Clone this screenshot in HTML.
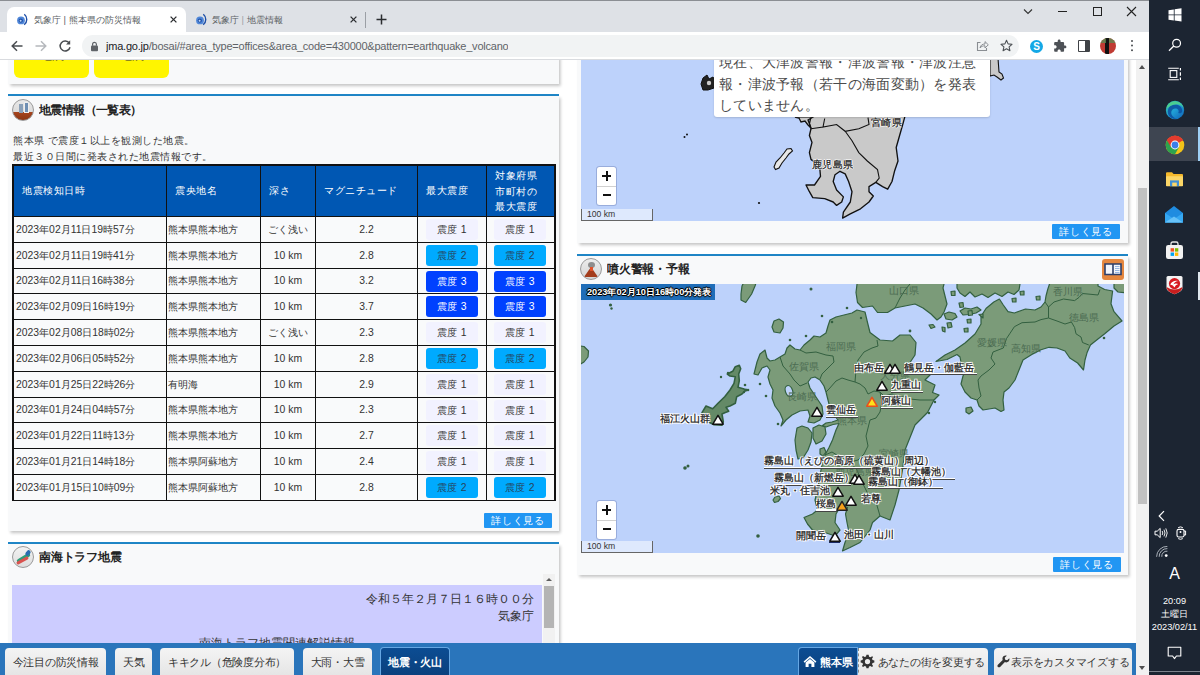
<!DOCTYPE html>
<html lang="ja">
<head>
<meta charset="utf-8">
<title>気象庁 | 熊本県の防災情報</title>
<style>
*{box-sizing:border-box;margin:0;padding:0}
html,body{width:1200px;height:675px;overflow:hidden;background:#fff}
body{position:relative;font-family:"Liberation Sans",sans-serif;color:#222;font-size:10.5px;line-height:1.2}
.abs{position:absolute}
.nw{white-space:nowrap;overflow:hidden}
/* ---------- browser chrome ---------- */
#tabstrip{left:0;top:0;width:1149px;height:32px;background:#dee1e6;border-top:1px solid #8b8e93}
#tab1{left:7px;top:7px;width:179px;height:26px;background:#fff;border-radius:7px 7px 0 0}
.tabtxt{top:12.8px;height:14px;font-size:9.4px;line-height:14px;color:#5a5e63;letter-spacing:0}
#toolbar{left:0;top:32px;width:1149px;height:28px;background:#fff;border-bottom:1px solid #d9dbdf}
#omni{left:82px;top:35px;width:937px;height:22px;border-radius:11px;background:#f1f3f4}
#url{left:106px;top:38px;height:16px;font-size:11px;line-height:16px;color:#5f6368;letter-spacing:-.22px}
#url b{font-weight:normal;color:#202124}
/* ---------- windows taskbar ---------- */
#taskbar{left:1149px;top:0;width:51px;height:675px;background:#1c2532}
#taskbar .t{position:absolute;left:0;width:51px;text-align:center;color:#fff;font-size:9.2px;line-height:12px;white-space:nowrap}
/* ---------- page ---------- */
#page{left:0;top:60px;width:1136px;height:615px;background:#fff;overflow:hidden}
#vscroll{left:1136px;top:60px;width:13px;height:615px;background:#f1f1f1}
.card{position:absolute;background:#f8f9fa;box-shadow:1.5px 2px 3px rgba(0,0,0,.24)}
.bline{position:absolute;height:2px;background:#1f86c7}
.sect{position:absolute;font-size:12px;font-weight:bold;color:#222;line-height:16px;white-space:nowrap;overflow:hidden;letter-spacing:-.2px}
.icon{position:absolute;width:22px;height:22px;border-radius:50%;border:1px solid #9a9a9a;background:#eee;overflow:hidden}
.more{position:absolute;width:68px;height:15px;background:#2196f3;color:#fff;font-size:10.4px;line-height:15px;text-align:center;border-radius:1px;white-space:nowrap;overflow:hidden;letter-spacing:.7px}
/* table */
#tbl{left:12px;top:164px;width:544px;height:337px;background:#111}
#tbl div{position:absolute;overflow:hidden;white-space:nowrap}
.th{background:#0057b3;color:#fff;font-size:10.4px;line-height:14px;padding-left:8px;letter-spacing:.5px}
.td{background:#f9fafb;color:#333;font-size:10.4px;line-height:24px;height:24px}
.c{text-align:center}
.bd{position:absolute;left:8px;top:2px;width:52px;height:21px;border-radius:3px;line-height:21px;text-align:center;font-size:10.4px;letter-spacing:.2px}
.s1{background:#f2f2ff;color:#333}
.s2{background:#00aaff;color:#26445a}
.s3{background:#0041ff;color:#fff}
/* bottom bar */
#bbar{left:0;top:643px;width:1136px;height:32px;background:#2a75bb}
.bb{position:absolute;top:5px;height:30px;border-radius:4px 4px 0 0;background:linear-gradient(#f4f4f4,#e4e4e4);color:#333;font-size:11px;line-height:28px;text-align:center;white-space:nowrap;overflow:hidden;letter-spacing:-.25px}
.bbon{background:linear-gradient(#0c4d93,#0a3f7c);color:#fff;font-weight:bold;border:1px solid #66a7e4;border-bottom:none;top:4px}
</style>
</head>
<body>
<!-- ================= BROWSER CHROME ================= -->
<div id="tabstrip" class="abs"></div>
<div id="tab1" class="abs"></div>
<svg class="abs" style="left:15px;top:12px" width="14" height="14" viewBox="0 0 14 14"><circle cx="6" cy="8.4" r="3.9" fill="#4f86d8"/><circle cx="5.8" cy="8.6" r="2.1" fill="#1d4ea6"/><circle cx="5.6" cy="8.8" r="1" fill="#bcd6f7"/><path d="M9.3 2.2 C12.6 4.8 12.6 10 9.2 12.8" fill="none" stroke="#1d4ea6" stroke-width="1.4"/></svg>
<div class="abs nw tabtxt" style="left:34px;width:128px">気象庁 | 熊本県の防災情報</div>
<svg class="abs" style="left:169px;top:15px" width="9" height="9" viewBox="0 0 9 9"><path d="M1.6 1.6 L7.4 7.4 M7.4 1.6 L1.6 7.4" stroke="#2b2d30" stroke-width="1.3"/></svg>
<svg class="abs" style="left:194px;top:12px" width="14" height="14" viewBox="0 0 14 14"><circle cx="6" cy="8.4" r="3.9" fill="#4f86d8"/><circle cx="5.8" cy="8.6" r="2.1" fill="#1d4ea6"/><circle cx="5.6" cy="8.8" r="1" fill="#bcd6f7"/><path d="M9.3 2.2 C12.6 4.8 12.6 10 9.2 12.8" fill="none" stroke="#1d4ea6" stroke-width="1.4"/></svg>
<div class="abs nw tabtxt" style="left:212px;width:100px">気象庁 <span style="color:#9aa0a6">|</span> 地震情報</div>
<svg class="abs" style="left:349px;top:15px" width="9" height="9" viewBox="0 0 9 9"><path d="M1.6 1.6 L7.4 7.4 M7.4 1.6 L1.6 7.4" stroke="#2b2d30" stroke-width="1.3"/></svg>
<div class="abs" style="left:365px;top:12px;width:1px;height:16px;background:#9b9fa5"></div>
<svg class="abs" style="left:376px;top:14px" width="11" height="11" viewBox="0 0 11 11"><path d="M5.5 0.5 V10.5 M0.5 5.5 H10.5" stroke="#2b2d30" stroke-width="1.5"/></svg>
<!-- window controls -->
<svg class="abs" style="left:1022px;top:7px" width="12" height="9" viewBox="0 0 12 9"><path d="M2 2.5 L6 6.5 L10 2.5" fill="none" stroke="#333" stroke-width="1.1"/></svg>
<div class="abs" style="left:1058px;top:11px;width:9px;height:1.2px;background:#222"></div>
<div class="abs" style="left:1093px;top:7px;width:9px;height:9px;border:1.2px solid #222"></div>
<svg class="abs" style="left:1126px;top:6px" width="11" height="11" viewBox="0 0 11 11"><path d="M1 1 L10 10 M10 1 L1 10" stroke="#222" stroke-width="1.1"/></svg>

<div id="toolbar" class="abs"></div>
<svg class="abs" style="left:10px;top:39px" width="14" height="14" viewBox="0 0 14 14"><path d="M12.5 7 H2.5 M7 2.2 L2.2 7 L7 11.8" fill="none" stroke="#4a4d51" stroke-width="1.5"/></svg>
<svg class="abs" style="left:34px;top:39px" width="14" height="14" viewBox="0 0 14 14"><path d="M1.5 7 H11.5 M7 2.2 L11.8 7 L7 11.8" fill="none" stroke="#b5b8bc" stroke-width="1.5"/></svg>
<svg class="abs" style="left:58px;top:39px" width="14" height="14" viewBox="0 0 14 14"><path d="M11.3 4.2 A5 5 0 1 0 12 8.2" fill="none" stroke="#4a4d51" stroke-width="1.5"/><path d="M12.2 1.2 V5.4 H8 Z" fill="#4a4d51"/></svg>
<div id="omni" class="abs"></div>
<svg class="abs" style="left:90px;top:41px" width="9" height="11" viewBox="0 0 9 11"><rect x="1" y="4.5" width="7" height="5.8" rx="1" fill="#5f6368"/><path d="M2.6 4.8 V3.2 a1.9 1.9 0 0 1 3.8 0 V4.8" fill="none" stroke="#5f6368" stroke-width="1.2"/></svg>
<div id="url" class="abs nw"><b>jma.go.jp</b>/bosai/#area_type=offices&amp;area_code=430000&amp;pattern=earthquake_volcano</div>
<!-- toolbar right icons -->
<svg class="abs" style="left:976px;top:40px" width="13" height="12" viewBox="0 0 13 12"><path d="M4.5 2.5 H1.5 V10.5 H10.5 V8" fill="none" stroke="#8a8e93" stroke-width="1.1"/><path d="M4 8 C4.5 5 6.5 4 9 4 V1.6 L12.3 4.8 L9 8 V5.8 C7 5.8 5.3 6.3 4 8 Z" fill="none" stroke="#8a8e93" stroke-width="1"/></svg>
<svg class="abs" style="left:1000px;top:39px" width="13" height="13" viewBox="0 0 13 13"><path d="M6.5 1.3 L8.1 4.9 L12 5.3 L9.1 7.9 L9.9 11.7 L6.5 9.7 L3.1 11.7 L3.9 7.9 L1 5.3 L4.9 4.9 Z" fill="none" stroke="#4e5256" stroke-width="1.1" stroke-linejoin="round"/></svg>
<div class="abs" style="left:1030px;top:40px;width:13px;height:13px;border-radius:50%;background:#14a8e6;color:#fff;font-size:10px;font-weight:bold;line-height:13px;text-align:center">S</div>
<svg class="abs" style="left:1053px;top:39px" width="14" height="14" viewBox="0 0 24 24"><path d="M20.5 11H19V7c0-1.1-.9-2-2-2h-4V3.500C13 2.120 11.880 1 10.500 1S8 2.120 8 3.500V5H4c-1.100 0-1.990.9-1.990 2v3.800H3.500c1.490 0 2.700 1.210 2.700 2.700s-1.210 2.700-2.700 2.700H2V20c0 1.100.9 2 2 2h3.800v-1.500c0-1.490 1.210-2.700 2.700-2.700 1.490 0 2.700 1.210 2.700 2.700V22H17c1.100 0 2-.9 2-2v-4h1.500c1.380 0 2.500-1.120 2.500-2.500S21.880 11 20.500 11z" fill="#4d5156"/></svg>
<div class="abs" style="left:1078px;top:40px;width:12px;height:12px;border:1.5px solid #3f4246;border-right-width:5px;border-radius:1px"></div>
<div class="abs" style="left:1100px;top:38px;width:16px;height:16px;border-radius:50%;background:#c03b33;overflow:hidden"><div class="abs" style="left:5px;top:0;width:4px;height:16px;background:#111"></div><div class="abs" style="left:0;top:0;width:16px;height:5px;background:#5b8a52;opacity:.8"></div><div class="abs" style="left:6px;top:0;width:3px;height:16px;background:#111"></div></div>
<div class="abs" style="left:1131px;top:40px;width:2.4px;height:2.4px;border-radius:50%;background:#4a4d51;box-shadow:0 4.6px 0 #4a4d51,0 9.2px 0 #4a4d51"></div>

<!-- ================= PAGE ================= -->
<div id="page" class="abs">
<!-- left column -->
<div class="card" style="left:8px;top:-4px;width:551px;height:28px"></div>
<div class="abs nw" style="left:14px;top:-10px;width:75px;height:28px;background:#fff500;border-radius:6px;text-align:center;font-size:12px;line-height:11px;color:#333;font-weight:bold">地震<br>&nbsp;</div>
<div class="abs nw" style="left:94px;top:-10px;width:75px;height:28px;background:#fff500;border-radius:6px;text-align:center;font-size:12px;line-height:11px;color:#333;font-weight:bold">地震<br>&nbsp;</div>
<div class="bline" style="left:8px;top:34px;width:551px"></div>
<div class="card" style="left:8px;top:36px;width:551px;height:435px"></div>
<div class="icon" style="left:12px;top:39px;background:linear-gradient(#e9e9e9 0,#dcdcdc 58%,#a8461e 58%,#8c3513 100%)"><div class="abs" style="left:6px;top:4px;width:4px;height:9px;background:#8aa0b8"></div><div class="abs" style="left:11px;top:2px;width:5px;height:11px;background:#6f8fb3;border:1px solid #eee"></div></div>
<div class="sect" style="left:39px;top:42px;width:130px;letter-spacing:-.6px">地震情報（一覧表）</div>
<div class="abs nw" style="left:13px;top:74px;width:300px;height:14px;line-height:14px;font-size:10.4px;letter-spacing:.5px;color:#333">熊本県 で震度１以上を観測した地震。</div>
<div class="abs nw" style="left:13px;top:90px;width:300px;height:14px;line-height:14px;font-size:10.4px;letter-spacing:.5px;color:#333">最近３０日間に発表された地震情報です。</div>
<div id="tbl" class="abs" style="top:104px">
<div class="th" style="left:2px;top:2px;width:152px;height:50px;line-height:50px">地震検知日時</div>
<div class="th" style="left:155px;top:2px;width:93px;height:50px;line-height:50px">震央地名</div>
<div class="th" style="left:249px;top:2px;width:54px;height:50px;line-height:50px">深さ</div>
<div class="th" style="left:304px;top:2px;width:101px;height:50px;line-height:50px">マグニチュード</div>
<div class="th" style="left:406px;top:2px;width:68px;height:50px;line-height:50px">最大震度</div>
<div class="th" style="left:475px;top:2px;width:67px;height:50px;line-height:15.5px;padding-top:2px">対象府県<br>市町村の<br>最大震度</div>
<div class="td" style="left:2px;width:152px;top:53px;height:25px;line-height:25px;padding-left:2px">2023年02月11日19時57分</div>
<div class="td" style="left:155px;width:93px;top:53px;height:25px;line-height:25px;padding-left:1px">熊本県熊本地方</div>
<div class="td c" style="left:249px;width:54px;top:53px;height:25px;line-height:25px">ごく浅い</div>
<div class="td c" style="left:304px;width:101px;top:53px;height:25px;line-height:25px">2.2</div>
<div class="td" style="left:406px;width:68px;top:53px;height:25px;line-height:25px"><div class="bd s1" style="left:8px">震度 1</div></div>
<div class="td" style="left:475px;width:67px;top:53px;height:25px;line-height:25px"><div class="bd s1" style="left:7px">震度 1</div></div>
<div class="td" style="left:2px;width:152px;top:79px;height:25px;line-height:25px;padding-left:2px">2023年02月11日19時41分</div>
<div class="td" style="left:155px;width:93px;top:79px;height:25px;line-height:25px;padding-left:1px">熊本県熊本地方</div>
<div class="td c" style="left:249px;width:54px;top:79px;height:25px;line-height:25px">10 km</div>
<div class="td c" style="left:304px;width:101px;top:79px;height:25px;line-height:25px">2.8</div>
<div class="td" style="left:406px;width:68px;top:79px;height:25px;line-height:25px"><div class="bd s2" style="left:8px">震度 2</div></div>
<div class="td" style="left:475px;width:67px;top:79px;height:25px;line-height:25px"><div class="bd s2" style="left:7px">震度 2</div></div>
<div class="td" style="left:2px;width:152px;top:105px;height:24px;line-height:24px;padding-left:2px">2023年02月11日16時38分</div>
<div class="td" style="left:155px;width:93px;top:105px;height:24px;line-height:24px;padding-left:1px">熊本県熊本地方</div>
<div class="td c" style="left:249px;width:54px;top:105px;height:24px;line-height:24px">10 km</div>
<div class="td c" style="left:304px;width:101px;top:105px;height:24px;line-height:24px">3.2</div>
<div class="td" style="left:406px;width:68px;top:105px;height:24px;line-height:24px"><div class="bd s3" style="left:8px">震度 3</div></div>
<div class="td" style="left:475px;width:67px;top:105px;height:24px;line-height:24px"><div class="bd s3" style="left:7px">震度 3</div></div>
<div class="td" style="left:2px;width:152px;top:130px;height:25px;line-height:25px;padding-left:2px">2023年02月09日16時19分</div>
<div class="td" style="left:155px;width:93px;top:130px;height:25px;line-height:25px;padding-left:1px">熊本県熊本地方</div>
<div class="td c" style="left:249px;width:54px;top:130px;height:25px;line-height:25px">10 km</div>
<div class="td c" style="left:304px;width:101px;top:130px;height:25px;line-height:25px">3.7</div>
<div class="td" style="left:406px;width:68px;top:130px;height:25px;line-height:25px"><div class="bd s3" style="left:8px">震度 3</div></div>
<div class="td" style="left:475px;width:67px;top:130px;height:25px;line-height:25px"><div class="bd s3" style="left:7px">震度 3</div></div>
<div class="td" style="left:2px;width:152px;top:156px;height:25px;line-height:25px;padding-left:2px">2023年02月08日18時02分</div>
<div class="td" style="left:155px;width:93px;top:156px;height:25px;line-height:25px;padding-left:1px">熊本県熊本地方</div>
<div class="td c" style="left:249px;width:54px;top:156px;height:25px;line-height:25px">ごく浅い</div>
<div class="td c" style="left:304px;width:101px;top:156px;height:25px;line-height:25px">2.3</div>
<div class="td" style="left:406px;width:68px;top:156px;height:25px;line-height:25px"><div class="bd s1" style="left:8px">震度 1</div></div>
<div class="td" style="left:475px;width:67px;top:156px;height:25px;line-height:25px"><div class="bd s1" style="left:7px">震度 1</div></div>
<div class="td" style="left:2px;width:152px;top:182px;height:25px;line-height:25px;padding-left:2px">2023年02月06日05時52分</div>
<div class="td" style="left:155px;width:93px;top:182px;height:25px;line-height:25px;padding-left:1px">熊本県熊本地方</div>
<div class="td c" style="left:249px;width:54px;top:182px;height:25px;line-height:25px">10 km</div>
<div class="td c" style="left:304px;width:101px;top:182px;height:25px;line-height:25px">2.8</div>
<div class="td" style="left:406px;width:68px;top:182px;height:25px;line-height:25px"><div class="bd s2" style="left:8px">震度 2</div></div>
<div class="td" style="left:475px;width:67px;top:182px;height:25px;line-height:25px"><div class="bd s2" style="left:7px">震度 2</div></div>
<div class="td" style="left:2px;width:152px;top:208px;height:25px;line-height:25px;padding-left:2px">2023年01月25日22時26分</div>
<div class="td" style="left:155px;width:93px;top:208px;height:25px;line-height:25px;padding-left:1px">有明海</div>
<div class="td c" style="left:249px;width:54px;top:208px;height:25px;line-height:25px">10 km</div>
<div class="td c" style="left:304px;width:101px;top:208px;height:25px;line-height:25px">2.9</div>
<div class="td" style="left:406px;width:68px;top:208px;height:25px;line-height:25px"><div class="bd s1" style="left:8px">震度 1</div></div>
<div class="td" style="left:475px;width:67px;top:208px;height:25px;line-height:25px"><div class="bd s1" style="left:7px">震度 1</div></div>
<div class="td" style="left:2px;width:152px;top:234px;height:24px;line-height:24px;padding-left:2px">2023年01月24日04時57分</div>
<div class="td" style="left:155px;width:93px;top:234px;height:24px;line-height:24px;padding-left:1px">熊本県熊本地方</div>
<div class="td c" style="left:249px;width:54px;top:234px;height:24px;line-height:24px">10 km</div>
<div class="td c" style="left:304px;width:101px;top:234px;height:24px;line-height:24px">2.3</div>
<div class="td" style="left:406px;width:68px;top:234px;height:24px;line-height:24px"><div class="bd s1" style="left:8px">震度 1</div></div>
<div class="td" style="left:475px;width:67px;top:234px;height:24px;line-height:24px"><div class="bd s1" style="left:7px">震度 1</div></div>
<div class="td" style="left:2px;width:152px;top:259px;height:25px;line-height:25px;padding-left:2px">2023年01月22日11時13分</div>
<div class="td" style="left:155px;width:93px;top:259px;height:25px;line-height:25px;padding-left:1px">熊本県熊本地方</div>
<div class="td c" style="left:249px;width:54px;top:259px;height:25px;line-height:25px">10 km</div>
<div class="td c" style="left:304px;width:101px;top:259px;height:25px;line-height:25px">2.7</div>
<div class="td" style="left:406px;width:68px;top:259px;height:25px;line-height:25px"><div class="bd s1" style="left:8px">震度 1</div></div>
<div class="td" style="left:475px;width:67px;top:259px;height:25px;line-height:25px"><div class="bd s1" style="left:7px">震度 1</div></div>
<div class="td" style="left:2px;width:152px;top:285px;height:25px;line-height:25px;padding-left:2px">2023年01月21日14時18分</div>
<div class="td" style="left:155px;width:93px;top:285px;height:25px;line-height:25px;padding-left:1px">熊本県阿蘇地方</div>
<div class="td c" style="left:249px;width:54px;top:285px;height:25px;line-height:25px">10 km</div>
<div class="td c" style="left:304px;width:101px;top:285px;height:25px;line-height:25px">2.4</div>
<div class="td" style="left:406px;width:68px;top:285px;height:25px;line-height:25px"><div class="bd s1" style="left:8px">震度 1</div></div>
<div class="td" style="left:475px;width:67px;top:285px;height:25px;line-height:25px"><div class="bd s1" style="left:7px">震度 1</div></div>
<div class="td" style="left:2px;width:152px;top:311px;height:25px;line-height:25px;padding-left:2px">2023年01月15日10時09分</div>
<div class="td" style="left:155px;width:93px;top:311px;height:25px;line-height:25px;padding-left:1px">熊本県阿蘇地方</div>
<div class="td c" style="left:249px;width:54px;top:311px;height:25px;line-height:25px">10 km</div>
<div class="td c" style="left:304px;width:101px;top:311px;height:25px;line-height:25px">2.8</div>
<div class="td" style="left:406px;width:68px;top:311px;height:25px;line-height:25px"><div class="bd s2" style="left:8px">震度 2</div></div>
<div class="td" style="left:475px;width:67px;top:311px;height:25px;line-height:25px"><div class="bd s2" style="left:7px">震度 2</div></div>
</div>
<div class="more" style="left:484px;top:453px">詳しく見る</div>
<div class="bline" style="left:8px;top:482px;width:551px"></div>
<div class="card" style="left:8px;top:484px;width:551px;height:140px"></div>
<div class="icon" style="left:12px;top:486px;background:linear-gradient(#f2f2f2,#dedede)"><div class="abs" style="left:3px;top:9px;width:15px;height:4px;background:#2e9e7a;transform:rotate(-32deg);border-radius:2px"></div><div class="abs" style="left:3px;top:12px;width:13px;height:3px;background:#d9534f;transform:rotate(-28deg);border-radius:2px"></div><div class="abs" style="left:12px;top:4px;width:6px;height:4px;background:#2b6cb0;transform:rotate(-50deg);border-radius:2px"></div></div>
<div class="sect" style="left:39px;top:489px;width:110px">南海トラフ地震</div>
<div class="abs" style="left:12px;top:525px;width:530px;height:70px;background:#ccccff"></div>
<div class="abs nw" style="left:250px;top:531px;width:284px;height:16px;line-height:16px;font-size:12px;color:#333;text-align:right">令和５年２月７日１６時００分</div>
<div class="abs nw" style="left:250px;top:548px;width:284px;height:16px;line-height:16px;font-size:12px;color:#333;text-align:right">気象庁</div>
<div class="abs nw" style="left:12px;top:575px;width:530px;height:16px;line-height:16px;font-size:12px;color:#333;text-align:center">南海トラフ地震関連解説情報</div>
<div class="abs" style="left:543px;top:514px;width:12px;height:90px;background:#f1f1f1"></div>
<div class="abs" style="left:546px;top:518px;width:0;height:0;border:3px solid transparent;border-top:none;border-bottom:3.5px solid #606060"></div>
<div class="abs" style="left:544px;top:526px;width:10px;height:42px;background:#b4b4b4"></div>
<!-- right column -->
<div class="card" style="left:577px;top:-4px;width:551px;height:187px"></div>
<div class="abs" style="left:581px;top:0;width:543px;height:161px;background:#bdd2fb;overflow:hidden">
<svg class="abs" style="left:0;top:0" width="543" height="161" viewBox="581 60 543 161">
<path d="M811.0 100.0 L811.0 116.8 L809.4 123.6 L811.0 128.7 L809.4 135.5 L812.0 142.4 L809.4 152.6 L811.0 159.4 L819.6 166.2 L820.5 176.4 L814.5 185.0 L806.0 185.0 L809.4 191.7 L812.8 197.7 L824.7 198.6 L833.2 202.0 L836.6 205.4 L841.7 202.0 L843.4 196.9 L836.6 190.0 L833.2 181.5 L835.0 174.7 L840.0 171.3 L845.2 173.9 L848.6 181.5 L852.0 191.7 L850.3 202.0 L843.4 212.2 L842.6 218.1 L850.3 213.9 L860.5 208.8 L869.0 202.0 L873.3 196.0 L869.0 191.7 L869.0 186.6 L875.8 182.4 L882.6 186.6 L887.7 189.2 L892.0 181.5 L894.5 171.3 L898.0 161.0 L896.2 147.5 L899.6 135.5 L903.0 123.6 L904.8 116.8 L906.0 100.0 Z" fill="#c9c9c9" stroke="#111" stroke-width="1.35" stroke-linejoin="round"/>
<path d="M845.2 131.3 L852.0 140.7 L858.8 152.6 L867.3 161.0 L877.5 169.6 L879.2 178.0 L875.8 182.4" fill="none" stroke="#111" stroke-width="1.1"/>
<path d="M811.0 128.7 L823.0 127.0 L824.7 118.5 L823.0 127.0 L836.6 124.5 L845.2 131.3 L858.8 128.7 L869.0 124.5 L868.0 117.7" fill="none" stroke="#111" stroke-width="1.1"/>
<path d="M774.0 167.0 L776.0 162.0 L780.0 158.0 L784.0 153.0 L787.0 149.0 L791.0 148.5 L792.5 151.0 L789.0 154.0 L786.0 158.0 L782.0 163.0 L779.0 168.0 L775.5 169.5 Z" fill="#e8e8e8" stroke="#111" stroke-width="1.1"/>
<path d="M795.0 117.0 L799.0 118.0 L801.0 122.0 L805.0 121.0 L808.0 125.0 L811.0 128.0 L808.0 120.0 L813.0 117.0 L805.0 116.5 Z" fill="#ccc" stroke="#111" stroke-width="1.3"/>
<path d="M701.0 84.0 L703.0 78.0 L707.0 75.0 L709.0 79.0 L713.0 77.0 L716.0 82.0 L714.0 88.0 L708.0 90.0 L703.0 90.0 Z" fill="#222" stroke="#111" stroke-width="1"/>
<circle cx="709" cy="83" r="2.2" fill="#ccc"/>
<path d="M990.0 58.0 L990.0 76.0 L994.0 75.0 L997.0 77.0 L1001.0 80.0 L1003.5 78.0 L1002.0 74.0 L999.0 72.0 L998.0 58.0 Z" fill="#c9c9c9" stroke="#111" stroke-width="1.1"/>
<circle cx="684.5" cy="137" r="1" fill="#111"/>
<circle cx="687" cy="134.5" r="1" fill="#111"/>
<circle cx="759" cy="203" r="1.1" fill="#111"/>
</svg>
<div class="abs nw" style="left:231px;top:98px;font-size:10.4px;letter-spacing:.4px;line-height:13px;color:#222;-webkit-text-stroke:.25px #222;text-shadow:0 0 1px #fff,1px 0 0 #fff,-1px 0 0 #fff,0 1px 0 #fff,0 -1px 0 #fff">鹿児島県</div>
<div class="abs nw" style="left:290px;top:56px;font-size:10.4px;letter-spacing:.4px;line-height:13px;color:#222;-webkit-text-stroke:.25px #222;text-shadow:0 0 1px #fff,1px 0 0 #fff,-1px 0 0 #fff,0 1px 0 #fff,0 -1px 0 #fff">宮崎県</div>
<div class="abs" style="left:133px;top:-10px;width:276px;height:67px;background:#fff;border-radius:3px;box-shadow:0 1px 2px rgba(0,0,0,.15)"></div>
<div class="abs nw" style="left:138px;top:-8.5px;width:268px;height:20px;font-size:14.3px;letter-spacing:.3px;line-height:20px;color:#4a4a4a">現在、大津波警報・津波警報・津波注意</div>
<div class="abs nw" style="left:138px;top:14px;width:268px;height:20px;font-size:14.3px;letter-spacing:.3px;line-height:20px;color:#4a4a4a">報・津波予報（若干の海面変動）を発表</div>
<div class="abs nw" style="left:138px;top:35px;width:268px;height:20px;font-size:14.3px;letter-spacing:.3px;line-height:20px;color:#4a4a4a">していません。</div>
<div class="abs" style="left:16px;top:107px;width:19px;height:38px;background:#fff;border-radius:2.5px;box-shadow:0 0 0 1px rgba(60,80,140,.28)"><div class="abs" style="left:0;top:18.5px;width:19px;height:1px;background:#d0d0d0"></div><div class="abs" style="left:5px;top:8.2px;width:9.4px;height:1.8px;background:#111"></div><div class="abs" style="left:8.8px;top:4.4px;width:1.8px;height:9.4px;background:#111"></div><div class="abs" style="left:5.5px;top:27.4px;width:8.4px;height:1.8px;background:#111"></div></div>
<div class="abs nw" style="left:0;top:149px;width:72px;height:12px;background:rgba(255,255,255,.5);border:1px solid #666;border-top:none;font-size:8.6px;line-height:11px;color:#333;padding-left:5px">100 km</div>
</div>
<div class="more" style="left:1052px;top:164px">詳しく見る</div>
<div class="bline" style="left:577px;top:194px;width:551px"></div>
<div class="card" style="left:577px;top:196px;width:551px;height:319px"></div>
<div class="icon" style="left:580px;top:198px;background:linear-gradient(#ececec,#d4d4d4)"><div class="abs" style="left:3px;top:8px;width:0;height:0;border-left:7.5px solid transparent;border-right:7.5px solid transparent;border-bottom:10px solid #a33c1c"></div><div class="abs" style="left:7px;top:3px;width:7px;height:6px;border-radius:50%;background:#8d8d8d"></div><div class="abs" style="left:9px;top:8px;width:3px;height:4px;background:#e0522a"></div></div>
<div class="sect" style="left:607px;top:201px;width:110px">噴火警報・予報</div>
<div class="abs" style="left:1102px;top:198.5px;width:22px;height:21.5px;background:#e5873f;border-radius:3px"><svg class="abs" style="left:2px;top:4px" width="18" height="13" viewBox="0 0 18 13"><path d="M1 1 H17 V11.5 H1 Z" fill="#f4f6fb" stroke="#2c3f6b" stroke-width="1.6"/><path d="M9 1 V12" stroke="#2c3f6b" stroke-width="1.6"/><path d="M11 3.5 H15.5 M11 5.5 H15.5 M11 7.5 H15.5 M11 9.5 H15.5" stroke="#8fb0e0" stroke-width=".9"/></svg></div>
<div class="abs" style="left:581px;top:224px;width:543px;height:269px;background:#bdd2fb;overflow:hidden">
<svg class="abs" style="left:0;top:0" width="543" height="269" viewBox="581 284 543 269">
<g fill="#7b9b79" stroke="#336040" stroke-width="1.2" stroke-linejoin="round">
<path d="M857.0 310.0 L852.0 313.0 L844.0 315.0 L836.0 317.0 L830.0 320.0 L828.0 326.0 L826.0 333.0 L820.0 337.0 L814.0 336.0 L810.0 340.0 L804.0 345.0 L800.0 350.0 L795.0 349.0 L790.0 345.0 L787.0 348.0 L785.0 354.0 L780.0 357.0 L775.0 360.0 L770.0 361.0 L767.0 358.0 L765.0 350.0 L760.0 354.0 L757.0 362.0 L754.0 374.0 L758.0 375.0 L762.0 368.0 L767.0 366.0 L770.0 370.0 L768.0 377.0 L770.0 384.0 L773.0 390.0 L772.0 398.0 L775.0 406.0 L780.0 413.0 L783.0 420.0 L781.0 426.0 L786.0 420.0 L792.0 415.0 L800.0 411.0 L808.0 410.0 L810.0 416.0 L808.0 422.0 L814.0 423.0 L820.0 420.0 L823.0 414.0 L822.0 406.0 L818.0 400.0 L814.0 394.0 L810.0 388.0 L808.0 382.0 L811.0 378.0 L815.0 377.0 L820.0 380.0 L824.0 386.0 L826.0 392.0 L828.0 400.0 L830.0 408.0 L834.0 415.0 L838.0 420.0 L832.0 422.0 L826.0 423.0 L822.5 425.5 L826.0 427.0 L833.0 424.5 L839.0 423.5 L836.0 430.0 L832.5 440.0 L829.0 447.5 L825.0 455.0 L822.5 462.5 L820.0 475.0 L817.5 490.0 L815.0 500.0 L817.5 510.0 L812.5 514.0 L804.0 517.5 L807.5 524.0 L812.5 530.0 L825.0 532.5 L835.0 536.0 L840.0 530.0 L835.0 522.5 L836.0 514.0 L839.0 509.0 L842.5 506.0 L847.5 507.5 L845.5 514.0 L847.0 522.5 L849.0 532.5 L845.0 542.5 L842.5 551.0 L850.0 547.5 L860.0 542.5 L870.0 530.0 L872.5 522.5 L880.0 516.0 L890.0 520.0 L895.0 505.0 L899.0 490.0 L902.5 470.0 L905.0 450.0 L910.0 437.5 L915.0 425.0 L927.5 412.5 L934.0 400.0 L939.0 395.0 L932.5 392.5 L935.0 385.0 L925.0 380.0 L932.5 372.5 L920.0 367.5 L910.0 362.5 L915.0 355.0 L916.0 342.5 L910.0 335.0 L900.0 335.0 L892.5 341.0 L880.0 340.0 L870.0 332.5 L867.5 322.5 L865.0 312.0 Z"/>
<ellipse cx="789" cy="391" rx="3.6" ry="5.6" fill="#bdd2fb" transform="rotate(-20 789 391)"/>
<path d="M957.0 280.0 L957.0 288.0 L960.0 293.0 L965.0 296.5 L970.0 292.0 L975.0 297.0 L982.0 294.0 L988.0 297.5 L995.0 293.0 L1002.0 296.5 L1008.0 292.0 L1014.0 294.5 L1019.0 290.0 L1020.0 284.0 L1021.0 280.0 Z"/>
<path d="M1114.0 280.0 L1114.0 288.0 L1118.0 292.0 L1124.0 292.7 L1130.0 290.0 L1130.0 280.0 Z"/>
<path d="M960.0 311.0 L965.0 308.0 L971.0 309.0 L977.0 307.0 L981.0 310.0 L976.0 313.0 L969.0 314.5 L963.0 315.0 Z"/>
<path d="M857.5 280.0 L856.0 292.5 L857.5 302.5 L862.5 307.5 L872.5 306.0 L877.5 312.5 L887.5 312.5 L895.0 308.0 L905.0 306.0 L915.0 304.0 L923.0 308.0 L931.0 314.0 L937.0 320.0 L941.0 317.0 L944.0 312.0 L947.0 304.0 L945.0 296.0 L943.0 288.0 L945.0 280.0 Z"/>
<path d="M936.0 361.5 L945.0 355.0 L955.0 350.0 L965.0 343.0 L975.0 334.0 L981.0 324.0 L981.0 316.4 L986.0 308.5 L993.8 302.0 L999.4 299.0 L1003.3 305.0 L1008.0 311.7 L1014.4 313.0 L1025.5 309.0 L1035.0 310.0 L1041.0 307.0 L1045.0 302.0 L1046.0 296.0 L1047.7 289.5 L1050.8 280.0 L1098.0 280.0 L1098.0 286.0 L1104.7 289.5 L1112.6 291.0 L1111.0 303.7 L1114.0 311.7 L1122.0 321.0 L1114.0 326.0 L1104.7 333.8 L1096.7 340.0 L1090.4 345.0 L1087.0 352.8 L1085.0 360.0 L1083.5 370.0 L1077.6 363.0 L1069.8 358.0 L1065.0 351.0 L1057.0 348.0 L1049.0 347.3 L1041.0 349.7 L1031.8 354.4 L1023.0 360.0 L1019.0 370.0 L1015.0 380.0 L1009.0 388.0 L1004.0 392.0 L1003.0 400.0 L1004.0 410.0 L1001.0 411.5 L995.0 408.0 L983.0 410.0 L979.0 406.0 L977.0 400.0 L971.0 398.0 L965.0 392.0 L961.0 384.0 L963.0 376.0 L966.0 370.0 L961.0 362.0 L960.0 357.0 L957.0 354.5 L947.0 359.5 Z"/>
<path d="M702.0 412.7 L706.0 406.0 L712.7 408.7 L718.0 403.3 L724.7 396.7 L730.0 390.0 L734.0 383.3 L735.3 376.7 L730.0 376.0 L727.3 374.0 L732.7 371.3 L735.3 366.7 L739.3 365.3 L740.7 368.7 L738.7 374.0 L739.3 380.7 L738.0 387.3 L743.3 388.7 L746.0 390.0 L742.0 394.0 L736.7 396.7 L735.3 403.3 L730.0 406.0 L726.0 407.3 L728.7 411.3 L724.7 412.7 L722.0 414.0 L723.3 422.0 L722.0 425.3 L714.0 424.7 L708.7 422.0 L703.3 416.7 Z" fill="#648a67" stroke-width="1.6"/>
<path d="M741.0 294.0 L742.0 286.0 L745.0 280.0 L757.0 280.0 L755.0 286.0 L751.6 294.0 L745.7 302.5 L741.0 300.0 Z"/>
<path d="M772.0 327.0 L774.0 321.0 L779.0 319.0 L783.5 322.0 L783.0 328.0 L780.0 333.0 L774.0 332.0 Z"/>
<path d="M579.0 346.0 L584.0 346.5 L588.5 351.0 L588.0 357.0 L584.0 362.0 L579.0 365.0 Z"/>
<path d="M797.0 428.0 L802.0 426.0 L808.0 428.0 L812.0 433.0 L811.0 442.0 L808.0 450.0 L803.0 458.0 L798.0 459.0 L796.0 450.0 L795.0 440.0 Z"/>
<path d="M813.0 428.0 L819.0 425.0 L825.0 427.0 L826.0 434.0 L822.0 441.0 L816.0 444.0 L813.0 438.0 Z"/>
<path d="M820.0 449.0 L824.0 447.5 L826.0 452.0 L823.0 456.0 L820.0 454.0 Z"/>
<path d="M773.0 500.0 L775.0 497.0 L779.0 496.0 L780.5 498.5 L778.0 501.5 L774.5 502.5 Z"/>
<path d="M944.0 314.0 L949.0 312.0 L955.0 313.5 L957.0 317.0 L952.0 320.0 L946.0 319.0 Z"/>
<path d="M929.0 325.0 L933.0 324.5 L935.0 327.0 L931.0 328.5 Z"/>
<path d="M942.0 327.0 L945.0 327.5 L945.0 332.0 L942.5 331.0 Z"/>
<path d="M947.0 323.0 L951.0 322.5 L952.0 327.0 L948.0 328.0 Z"/>
<path d="M959.0 303.0 L963.0 302.5 L963.5 307.0 L960.0 307.5 Z"/>
<path d="M968.0 311.0 L972.0 310.5 L972.5 315.0 L968.5 315.5 Z"/>
<path d="M967.0 319.5 L971.0 319.0 L971.0 323.0 L967.5 323.0 Z"/>
<path d="M964.0 328.5 L968.0 328.0 L968.0 332.0 L964.5 332.0 Z"/>
<path d="M979.0 314.5 L983.0 314.0 L983.0 318.0 Z"/>
<path d="M1012.0 298.5 L1016.0 298.0 L1016.0 302.0 L1012.5 302.0 Z"/>
<path d="M1020.0 291.5 L1024.0 291.0 L1024.0 295.0 L1020.5 295.0 Z"/>
<path d="M1036.0 296.5 L1040.0 296.0 L1040.0 300.0 L1036.5 300.0 Z"/>
<path d="M951.0 291.5 L955.0 291.0 L955.0 295.5 L951.5 295.5 Z"/>
<path d="M966.0 408.0 L971.0 407.0 L973.0 411.0 L969.0 414.0 L966.0 412.0 Z"/>
</g>
<g fill="#336040">
<circle cx="610.5" cy="305" r="1.6"/>
<circle cx="611.5" cy="308.5" r="1.2"/>
<circle cx="685" cy="468" r="1.8"/>
<circle cx="688" cy="466" r="1.5"/>
<circle cx="758" cy="536" r="1.8"/>
<circle cx="746" cy="390" r="1.5"/>
<circle cx="721" cy="377" r="1.2"/>
<circle cx="728" cy="373" r="1.2"/>
<circle cx="811" cy="289" r="1.5"/>
<circle cx="861" cy="318" r="1.2"/>
<circle cx="910" cy="331" r="1.4"/>
<circle cx="1104" cy="338" r="1.3"/>
<circle cx="935" cy="402" r="1.2"/>
<circle cx="929" cy="413" r="1.2"/>
<circle cx="778" cy="424" r="1.3"/>
<circle cx="766" cy="396" r="1.3"/>
<circle cx="760" cy="384" r="1.3"/>
<circle cx="748" cy="390" r="1.3"/>
<circle cx="744" cy="392" r="1.2"/>
<circle cx="790" cy="340" r="1.3"/>
<circle cx="806" cy="336" r="1.3"/>
<circle cx="832" cy="322" r="1.3"/>
<circle cx="847" cy="308" r="1.3"/>
<circle cx="822" cy="316" r="1.3"/>
<circle cx="745" cy="385" r="1.3"/>
</g>
<g fill="none" stroke="#336040" stroke-width="1">
<path d="M800.0 350.0 L806.0 353.0 L816.0 352.0 L826.0 355.0 L833.0 356.0 L834.0 362.0 L828.0 368.0 L822.0 374.0 L820.0 379.0"/>
<path d="M780.0 357.0 L783.0 366.0 L790.0 374.0 L794.0 380.0 L800.0 386.0 L807.0 383.0"/>
<path d="M826.0 392.0 L829.0 389.0 L836.0 381.0 L842.0 378.0 L848.0 380.0 L855.0 382.0"/>
<path d="M855.0 382.0 L856.0 370.0 L858.0 360.0 L864.0 352.0 L872.0 348.0 L878.0 346.0 L877.0 340.0"/>
<path d="M855.0 382.0 L860.0 384.0 L865.0 388.0 L868.0 394.0 L874.0 391.0 L880.0 392.0 L884.0 396.0 L892.0 394.0 L900.0 396.0 L910.0 399.0 L920.0 400.0 L934.0 400.0"/>
<path d="M880.0 392.0 L882.0 402.0 L880.0 412.0 L876.0 418.0 L870.0 420.0 L868.0 428.0 L866.0 436.0 L868.0 446.0 L864.0 454.0 L858.0 460.0 L850.0 462.0"/>
<path d="M825.0 455.0 L832.0 452.0 L840.0 457.0 L850.0 462.0 L857.0 470.0 L862.0 482.0 L868.0 494.0 L876.0 502.0 L880.0 516.0"/>
<path d="M1045.0 302.0 L1048.5 307.0 L1054.0 302.0 L1063.5 299.0 L1074.6 300.6 L1079.0 297.4 L1082.5 293.5 L1098.0 295.0 L1100.0 289.5"/>
<path d="M1048.5 307.0 L1048.5 318.0 L1057.0 321.0 L1065.0 324.0 L1071.4 322.0 L1074.6 327.5 L1076.0 333.8 L1081.0 337.0 L1082.5 342.5 L1088.8 345.0"/>
<path d="M1048.5 318.0 L1041.0 319.6 L1035.0 322.0 L1022.0 322.7 L1014.4 326.7 L1009.7 333.8 L1006.5 338.6 L1003.3 348.0 L993.0 352.0 L991.0 358.0 L995.0 364.0 L989.0 370.0 L981.0 376.0 L978.0 380.0 L979.0 388.0 L981.0 396.0 L977.0 400.0"/>
<path d="M895.0 308.0 L900.0 298.0 L905.0 290.0 L910.0 284.0"/>
</g>
</svg>
<div class="abs nw" style="left:308px;top:0px;font-size:10.4px;line-height:14px;color:#4c6c52">山口県</div>
<div class="abs nw" style="left:245px;top:56px;font-size:10.4px;line-height:14px;color:#4c6c52">福岡県</div>
<div class="abs nw" style="left:208px;top:76px;font-size:10.4px;line-height:14px;color:#4c6c52">佐賀県</div>
<div class="abs nw" style="left:206px;top:106px;font-size:10.4px;line-height:14px;color:#4c6c52">長崎県</div>
<div class="abs nw" style="left:256px;top:130px;font-size:10.4px;line-height:14px;color:#4c6c52">熊本県</div>
<div class="abs nw" style="left:396px;top:52px;font-size:10.4px;line-height:14px;color:#4c6c52">愛媛県</div>
<div class="abs nw" style="left:430px;top:58px;font-size:10.4px;line-height:14px;color:#4c6c52">高知県</div>
<div class="abs nw" style="left:472px;top:1px;font-size:10.4px;line-height:14px;color:#4c6c52">香川県</div>
<div class="abs nw" style="left:488px;top:27px;font-size:10.4px;line-height:14px;color:#4c6c52">徳島県</div>
<div class="abs nw" style="left:299px;top:85px;font-size:10.4px;line-height:14px;color:#4c6c52">大分県</div>
<div class="abs nw" style="left:298px;top:163px;font-size:10.4px;line-height:14px;color:#4c6c52">宮崎県</div>
<div class="abs nw" style="left:254px;top:181px;font-size:10.4px;line-height:14px;color:#4c6c52">鹿児島県</div>
<div class="abs nw" style="left:79.0px;top:127.7px;width:55px;height:14px;font-size:10.4px;line-height:14px;color:#1a1a1a;-webkit-text-stroke:.25px #1a1a1a;text-shadow:0 0 1.5px #fff,1px 0 0 #fff,-1px 0 0 #fff,0 1px 0 #fff,0 -1px 0 #fff,1px 1px 0 #fff,-1px -1px 0 #fff,1px -1px 0 #fff,-1px 1px 0 #fff">福江火山群</div>
<div class="abs nw" style="left:272.8px;top:76.5px;width:34px;height:14px;font-size:10.4px;line-height:14px;color:#1a1a1a;-webkit-text-stroke:.25px #1a1a1a;text-shadow:0 0 1.5px #fff,1px 0 0 #fff,-1px 0 0 #fff,0 1px 0 #fff,0 -1px 0 #fff,1px 1px 0 #fff,-1px -1px 0 #fff,1px -1px 0 #fff,-1px 1px 0 #fff">由布岳</div>
<div class="abs nw" style="left:322.8px;top:76.5px;width:75px;height:14px;font-size:10.4px;line-height:14px;color:#1a1a1a;-webkit-text-stroke:.25px #1a1a1a;text-shadow:0 0 1.5px #fff,1px 0 0 #fff,-1px 0 0 #fff,0 1px 0 #fff,0 -1px 0 #fff,1px 1px 0 #fff,-1px -1px 0 #fff,1px -1px 0 #fff,-1px 1px 0 #fff">鶴見岳・伽藍岳</div>
<div class="abs" style="left:322.8px;top:89.1px;width:73px;height:2.4px;background:#fff;border-bottom:1.2px solid #444"></div>
<div class="abs nw" style="left:310.0px;top:94.0px;width:34px;height:14px;font-size:10.4px;line-height:14px;color:#1a1a1a;-webkit-text-stroke:.25px #1a1a1a;text-shadow:0 0 1.5px #fff,1px 0 0 #fff,-1px 0 0 #fff,0 1px 0 #fff,0 -1px 0 #fff,1px 1px 0 #fff,-1px -1px 0 #fff,1px -1px 0 #fff,-1px 1px 0 #fff">九重山</div>
<div class="abs" style="left:310.0px;top:106.6px;width:32px;height:2.4px;background:#fff;border-bottom:1.2px solid #444"></div>
<div class="abs nw" style="left:300.0px;top:110.0px;width:34px;height:14px;font-size:10.4px;line-height:14px;color:#1a1a1a;-webkit-text-stroke:.25px #1a1a1a;text-shadow:0 0 1.5px #fff,1px 0 0 #fff,-1px 0 0 #fff,0 1px 0 #fff,0 -1px 0 #fff,1px 1px 0 #fff,-1px -1px 0 #fff,1px -1px 0 #fff,-1px 1px 0 #fff">阿蘇山</div>
<div class="abs" style="left:300.0px;top:122.6px;width:32px;height:2.4px;background:#fff;border-bottom:1.2px solid #444"></div>
<div class="abs nw" style="left:245.0px;top:119.0px;width:34px;height:14px;font-size:10.4px;line-height:14px;color:#1a1a1a;-webkit-text-stroke:.25px #1a1a1a;text-shadow:0 0 1.5px #fff,1px 0 0 #fff,-1px 0 0 #fff,0 1px 0 #fff,0 -1px 0 #fff,1px 1px 0 #fff,-1px -1px 0 #fff,1px -1px 0 #fff,-1px 1px 0 #fff">雲仙岳</div>
<div class="abs" style="left:245.0px;top:131.6px;width:32px;height:2.4px;background:#fff;border-bottom:1.2px solid #444"></div>
<div class="abs nw" style="left:182.8px;top:170.0px;width:174px;height:14px;font-size:10.4px;line-height:14px;color:#1a1a1a;-webkit-text-stroke:.25px #1a1a1a;text-shadow:0 0 1.5px #fff,1px 0 0 #fff,-1px 0 0 #fff,0 1px 0 #fff,0 -1px 0 #fff,1px 1px 0 #fff,-1px -1px 0 #fff,1px -1px 0 #fff,-1px 1px 0 #fff">霧島山（えびの高原（硫黄山）周辺）</div>
<div class="abs" style="left:182.8px;top:182.6px;width:172px;height:2.4px;background:#fff;border-bottom:1.2px solid #444"></div>
<div class="abs nw" style="left:290.0px;top:181.0px;width:80px;height:14px;font-size:10.4px;line-height:14px;color:#1a1a1a;-webkit-text-stroke:.25px #1a1a1a;text-shadow:0 0 1.5px #fff,1px 0 0 #fff,-1px 0 0 #fff,0 1px 0 #fff,0 -1px 0 #fff,1px 1px 0 #fff,-1px -1px 0 #fff,1px -1px 0 #fff,-1px 1px 0 #fff">霧島山（大幡池）</div>
<div class="abs" style="left:290.0px;top:193.6px;width:84px;height:2.4px;background:#fff;border-bottom:1.2px solid #444"></div>
<div class="abs nw" style="left:192.8px;top:187.0px;width:79px;height:14px;font-size:10.4px;line-height:14px;color:#1a1a1a;-webkit-text-stroke:.25px #1a1a1a;text-shadow:0 0 1.5px #fff,1px 0 0 #fff,-1px 0 0 #fff,0 1px 0 #fff,0 -1px 0 #fff,1px 1px 0 #fff,-1px -1px 0 #fff,1px -1px 0 #fff,-1px 1px 0 #fff">霧島山（新燃岳）</div>
<div class="abs" style="left:192.8px;top:199.6px;width:77px;height:2.4px;background:#fff;border-bottom:1.2px solid #444"></div>
<div class="abs nw" style="left:286.5px;top:190.5px;width:70px;height:14px;font-size:10.4px;line-height:14px;color:#1a1a1a;-webkit-text-stroke:.25px #1a1a1a;text-shadow:0 0 1.5px #fff,1px 0 0 #fff,-1px 0 0 #fff,0 1px 0 #fff,0 -1px 0 #fff,1px 1px 0 #fff,-1px -1px 0 #fff,1px -1px 0 #fff,-1px 1px 0 #fff">霧島山（御鉢）</div>
<div class="abs" style="left:286.5px;top:203.1px;width:75px;height:2.4px;background:#fff;border-bottom:1.2px solid #444"></div>
<div class="abs nw" style="left:188.5px;top:200.0px;width:65px;height:14px;font-size:10.4px;line-height:14px;color:#1a1a1a;-webkit-text-stroke:.25px #1a1a1a;text-shadow:0 0 1.5px #fff,1px 0 0 #fff,-1px 0 0 #fff,0 1px 0 #fff,0 -1px 0 #fff,1px 1px 0 #fff,-1px -1px 0 #fff,1px -1px 0 #fff,-1px 1px 0 #fff">米丸・住吉池</div>
<div class="abs nw" style="left:279.8px;top:208.0px;width:23px;height:14px;font-size:10.4px;line-height:14px;color:#1a1a1a;-webkit-text-stroke:.25px #1a1a1a;text-shadow:0 0 1.5px #fff,1px 0 0 #fff,-1px 0 0 #fff,0 1px 0 #fff,0 -1px 0 #fff,1px 1px 0 #fff,-1px -1px 0 #fff,1px -1px 0 #fff,-1px 1px 0 #fff">若尊</div>
<div class="abs nw" style="left:235.0px;top:212.8px;width:23px;height:14px;font-size:10.4px;line-height:14px;color:#1a1a1a;-webkit-text-stroke:.25px #1a1a1a;text-shadow:0 0 1.5px #fff,1px 0 0 #fff,-1px 0 0 #fff,0 1px 0 #fff,0 -1px 0 #fff,1px 1px 0 #fff,-1px -1px 0 #fff,1px -1px 0 #fff,-1px 1px 0 #fff">桜島</div>
<div class="abs" style="left:235.0px;top:225.4px;width:21px;height:2.4px;background:#fff;border-bottom:1.2px solid #444"></div>
<div class="abs nw" style="left:214.5px;top:245.0px;width:34px;height:14px;font-size:10.4px;line-height:14px;color:#1a1a1a;-webkit-text-stroke:.25px #1a1a1a;text-shadow:0 0 1.5px #fff,1px 0 0 #fff,-1px 0 0 #fff,0 1px 0 #fff,0 -1px 0 #fff,1px 1px 0 #fff,-1px -1px 0 #fff,1px -1px 0 #fff,-1px 1px 0 #fff">開聞岳</div>
<div class="abs nw" style="left:262.8px;top:244.0px;width:55px;height:14px;font-size:10.4px;line-height:14px;color:#1a1a1a;-webkit-text-stroke:.25px #1a1a1a;text-shadow:0 0 1.5px #fff,1px 0 0 #fff,-1px 0 0 #fff,0 1px 0 #fff,0 -1px 0 #fff,1px 1px 0 #fff,-1px -1px 0 #fff,1px -1px 0 #fff,-1px 1px 0 #fff">池田・山川</div>
<svg class="abs" style="left:130.0px;top:129.0px" width="14" height="14" viewBox="-7 -7 14 14"><path d="M0 -4.6 L5.2 4.2 H-5.2 Z" fill="#fff" stroke="#111" stroke-width="1.5" stroke-linejoin="round"/></svg>
<svg class="abs" style="left:302.0px;top:77.8px" width="14" height="14" viewBox="-7 -7 14 14"><path d="M0 -4.6 L5.2 4.2 H-5.2 Z" fill="#fff" stroke="#111" stroke-width="1.5" stroke-linejoin="round"/></svg>
<svg class="abs" style="left:306.5px;top:77.8px" width="14" height="14" viewBox="-7 -7 14 14"><path d="M0 -4.6 L5.2 4.2 H-5.2 Z" fill="#fff" stroke="#111" stroke-width="1.5" stroke-linejoin="round"/></svg>
<svg class="abs" style="left:294.0px;top:95.0px" width="14" height="14" viewBox="-7 -7 14 14"><path d="M0 -4.6 L5.2 4.2 H-5.2 Z" fill="#fff" stroke="#111" stroke-width="1.5" stroke-linejoin="round"/></svg>
<svg class="abs" style="left:228.8px;top:120.8px" width="14" height="14" viewBox="-7 -7 14 14"><path d="M0 -4.6 L5.2 4.2 H-5.2 Z" fill="#fff" stroke="#111" stroke-width="1.5" stroke-linejoin="round"/></svg>
<svg class="abs" style="left:267.0px;top:187.8px" width="14" height="14" viewBox="-7 -7 14 14"><path d="M0 -4.6 L5.2 4.2 H-5.2 Z" fill="#fff" stroke="#111" stroke-width="1.5" stroke-linejoin="round"/></svg>
<svg class="abs" style="left:270.8px;top:189.0px" width="14" height="14" viewBox="-7 -7 14 14"><path d="M0 -4.6 L5.2 4.2 H-5.2 Z" fill="#fff" stroke="#111" stroke-width="1.5" stroke-linejoin="round"/></svg>
<svg class="abs" style="left:249.5px;top:200.8px" width="14" height="14" viewBox="-7 -7 14 14"><path d="M0 -4.6 L5.2 4.2 H-5.2 Z" fill="#fff" stroke="#111" stroke-width="1.5" stroke-linejoin="round"/></svg>
<svg class="abs" style="left:263.0px;top:209.8px" width="14" height="14" viewBox="-7 -7 14 14"><path d="M0 -4.6 L5.2 4.2 H-5.2 Z" fill="#fff" stroke="#111" stroke-width="1.5" stroke-linejoin="round"/></svg>
<svg class="abs" style="left:283.5px;top:111.0px" width="14" height="14" viewBox="-7 -7 14 14"><path d="M0 -4.6 L5.2 4.2 H-5.2 Z" fill="#ffe21a" stroke="#e8501e" stroke-width="1.6" stroke-linejoin="round"/></svg>
<svg class="abs" style="left:253.8px;top:214.8px" width="14" height="14" viewBox="-7 -7 14 14"><path d="M0 -4.6 L5.2 4.2 H-5.2 Z" fill="#f6a21c" stroke="#222" stroke-width="1.4" stroke-linejoin="round"/></svg>
<svg class="abs" style="left:246.5px;top:246.0px" width="14" height="14" viewBox="-7 -7 14 14"><path d="M0 -4.6 L5.2 4.2 H-5.2 Z" fill="#fff" stroke="#111" stroke-width="1.6" stroke-linejoin="round"/></svg>
<div class="abs" style="left:248px;top:257.5px;width:11px;height:1.6px;background:#1a2a66"></div>
<div class="abs nw" style="left:0;top:0;width:134px;height:16px;background:#1f6db8;color:#fff;font-size:9.2px;font-weight:bold;line-height:16px;padding-left:6px;text-shadow:0 0 1px #000,0 0 2px #000,1px 0 0 #000,-1px 0 0 #000,0 1px 0 #000,0 -1px 0 #000">2023年02月10日16時00分発表</div>
<div class="abs" style="left:16px;top:217px;width:19px;height:38px;background:#fff;border-radius:2.5px;box-shadow:0 0 0 1px rgba(60,80,140,.28)"><div class="abs" style="left:0;top:18.5px;width:19px;height:1px;background:#d0d0d0"></div><div class="abs" style="left:5px;top:8.2px;width:9.4px;height:1.8px;background:#111"></div><div class="abs" style="left:8.8px;top:4.4px;width:1.8px;height:9.4px;background:#111"></div><div class="abs" style="left:5.5px;top:27.4px;width:8.4px;height:1.8px;background:#111"></div></div>
<div class="abs nw" style="left:0;top:257px;width:72px;height:12px;background:rgba(255,255,255,.5);border:1px solid #666;border-top:none;font-size:8.6px;line-height:11px;color:#333;padding-left:5px">100 km</div>
</div>
<div class="more" style="left:1053px;top:497px">詳しく見る</div>
<!-- bottom bar (abs y 643 => page y 583) -->
<div id="bbar" class="abs" style="top:583px">
<div class="bb" style="left:5px;width:101px">今注目の防災情報</div>
<div class="bb" style="left:115px;width:37px">天気</div>
<div class="bb" style="left:160px;width:134px">キキクル（危険度分布）</div>
<div class="bb" style="left:303px;width:69px">大雨・大雪</div>
<div class="bb bbon" style="left:380px;width:70px">地震・火山</div>
<div class="bb bbon" style="left:798px;width:60px;text-align:left;padding-left:21px;border-radius:4px 0 0 0">熊本県</div>
<svg class="abs" style="left:803px;top:12px" width="14" height="13" viewBox="0 0 14 13"><path d="M7 1 L0.6 6.6 L1.6 7.7 L7 3 L12.4 7.7 L13.4 6.6 Z" fill="#fff"/><path d="M2.6 7.6 L7 3.9 L11.4 7.6 V12 H8.4 V8.8 H5.6 V12 H2.6 Z" fill="#fff"/></svg>
<div class="bb" style="left:858px;width:130px;text-align:left;padding-left:18.5px;border-radius:0 4px 0 0;border-left:1px dashed #888">あなたの街を変更する</div>
<svg class="abs" style="left:860px;top:11px" width="15" height="15" viewBox="0 0 16 16"><path d="M8 0.8 L9.2 0.8 L9.7 2.8 L11.2 3.4 L13 2.3 L13.9 3.2 L12.8 5 L13.4 6.4 L15.3 6.9 V9.1 L13.4 9.6 L12.8 11 L13.9 12.8 L12.8 13.9 L11 12.8 L9.6 13.4 L9.1 15.3 H6.9 L6.4 13.4 L5 12.8 L3.2 13.9 L2.1 12.8 L3.2 11 L2.6 9.6 L0.7 9.1 V6.9 L2.6 6.4 L3.2 5 L2.1 3.2 L3.2 2.1 L5 3.2 L6.4 2.6 L6.9 0.8 Z M8 5.2 A2.8 2.8 0 1 0 8 10.8 A2.8 2.8 0 1 0 8 5.2 Z" fill="#333" fill-rule="evenodd"/></svg>
<div class="bb" style="left:994px;width:138px;text-align:left;padding-left:17px">表示をカスタマイズする</div>
<svg class="abs" style="left:997px;top:12px" width="13" height="13" viewBox="0 0 13 13"><path d="M12.3 3.2 L10.2 5.3 L8.2 4.8 L7.7 2.8 L9.8 0.7 C8 0.1 6.2 0.9 5.6 2.5 C5.3 3.4 5.4 4.2 5.7 4.9 L0.9 9.7 C0.3 10.3 0.3 11.3 0.9 11.9 C1.5 12.5 2.5 12.5 3.1 11.9 L7.9 7.1 C8.7 7.5 9.7 7.5 10.6 7.1 C12.1 6.4 12.8 4.8 12.3 3.2 Z" fill="#333"/></svg>
</div>

</div>

<!-- page scrollbar -->
<div id="vscroll" class="abs">
 <div class="abs" style="left:3px;top:5px;width:0;height:0;border:3.2px solid transparent;border-top:none;border-bottom:4px solid #505050"></div>
 <div class="abs" style="left:2px;top:128px;width:9px;height:316px;background:#c1c1c1"></div>
 <div class="abs" style="left:3px;top:606px;width:0;height:0;border:3.2px solid transparent;border-bottom:none;border-top:4px solid #505050"></div>
</div>

<!-- ================= TASKBAR ================= -->
<div id="taskbar" class="abs">
<!-- windows logo -->
<svg class="abs" style="left:19px;top:8px" width="14" height="14" viewBox="0 0 14 14"><path d="M0.5 2.2 L5.8 1.4 V6.5 H0.5 Z M6.6 1.3 L13.5 0.3 V6.5 H6.6 Z M0.5 7.3 H5.8 V12.4 L0.5 11.7 Z M6.6 7.3 H13.5 V13.6 L6.6 12.6 Z" fill="#fff"/></svg>
<!-- search -->
<svg class="abs" style="left:19px;top:38px" width="14" height="14" viewBox="0 0 14 14"><circle cx="8.6" cy="5.2" r="3.9" fill="none" stroke="#fff" stroke-width="1.2"/><path d="M5.8 8 L1 12.8" stroke="#fff" stroke-width="1.3"/></svg>
<!-- task view -->
<svg class="abs" style="left:18px;top:67px" width="15" height="14" viewBox="0 0 15 14"><rect x="3.2" y="3.6" width="6.6" height="6.8" fill="none" stroke="#fff" stroke-width="1.1"/><path d="M1.2 1.2 H11.8 M1.2 12.8 H11.8" stroke="#fff" stroke-width="1.1"/><path d="M13.4 1 V3.4 M13.4 5.2 V8.8 M13.4 10.6 V13" stroke="#fff" stroke-width="1.2"/></svg>
<!-- edge -->
<svg class="abs" style="left:16px;top:100px" width="20" height="20" viewBox="0 0 20 20"><defs><linearGradient id="eg" x1="0" y1="0" x2="1" y2="1"><stop offset="0" stop-color="#35c1a1"/><stop offset=".5" stop-color="#1f9fd6"/><stop offset="1" stop-color="#0f5fb5"/></linearGradient></defs><circle cx="10" cy="10" r="9.2" fill="url(#eg)"/><path d="M3 13.5 C1.8 8 6 4.2 10.5 4.5 C15 4.8 17.6 8.2 17.2 11.2 C16.9 13.2 15 13.8 13.2 13 C14.8 10.4 12.6 8.2 10 8.4 C7.2 8.6 5.6 11.2 6.6 14.4 C7.4 16.8 9.6 18.2 12 18.4 C8 19.6 4 17.4 3 13.5 Z" fill="#0c4fa0" opacity=".85"/><path d="M1.2 9 C2 4 6.5 1 11 1.4 C15.4 1.8 18.6 5 18.9 9.4 C18.2 6.4 15.6 4.4 12 4.3 C7.4 4.2 3.6 6.6 1.2 9 Z" fill="#4fd08c" opacity=".9"/></svg>
<!-- chrome (active) -->
<div class="abs" style="left:0;top:127px;width:49px;height:34px;background:#3e4551"></div>
<div class="abs" style="left:49px;top:127px;width:2px;height:34px;background:#9fd0f5"></div>
<svg class="abs" style="left:16px;top:135px" width="20" height="20" viewBox="0 0 20 20"><circle cx="10" cy="10" r="9.3" fill="#f2c318"/><path d="M10 10 L1.95 5.35 A9.3 9.3 0 0 1 18.05 5.35 Z" fill="#e33b2e"/><path d="M10 10 L1.95 5.35 A9.3 9.3 0 0 0 10 19.3 L14.2 12.1 Z" fill="#2da44e"/><path d="M10 5.4 H18.1 A9.3 9.3 0 0 0 1.95 5.35 L6 12.3 Z" fill="#e33b2e"/><circle cx="10" cy="10" r="4.4" fill="#fff"/><circle cx="10" cy="10" r="3.4" fill="#3b7ee8"/></svg>
<!-- explorer -->
<svg class="abs" style="left:16px;top:171px" width="19" height="17" viewBox="0 0 19 17"><path d="M1 2.2 Q1 1.2 2 1.2 H7 L8.6 3 H17 Q18 3 18 4 V14.5 H1 Z" fill="#f5b92c"/><rect x="1" y="5.2" width="17" height="10" rx=".8" fill="#fbd667"/><rect x="5" y="9.4" width="9" height="5.8" fill="#3f8fd6"/><rect x="7.2" y="11.6" width="4.6" height="3.6" fill="#fbd667"/></svg>
<!-- mail -->
<svg class="abs" style="left:15px;top:205px" width="20" height="19" viewBox="0 0 20 19"><path d="M1 8 L10 1 L19 8 V17.5 H1 Z" fill="#1f8ce0"/><path d="M1 8 L10 14 L19 8 V17.5 H1 Z" fill="#36a8f2"/><path d="M1 17.5 L10 11.5 L19 17.5 Z" fill="#67c2f8"/></svg>
<!-- store -->
<svg class="abs" style="left:16px;top:240px" width="19" height="20" viewBox="0 0 19 20"><path d="M6 5.5 V3.8 Q6 2 7.8 2 H11.2 Q13 2 13 3.8 V5.5" fill="none" stroke="#e8e8e8" stroke-width="1.3"/><rect x="1" y="5" width="17" height="14" rx="2.2" fill="#f2f2f2"/><rect x="5.6" y="8.2" width="3.4" height="3.4" fill="#f25022"/><rect x="9.9" y="8.2" width="3.4" height="3.4" fill="#7fba00"/><rect x="5.6" y="12.5" width="3.4" height="3.4" fill="#00a4ef"/><rect x="9.9" y="12.5" width="3.4" height="3.4" fill="#ffb900"/></svg>
<!-- trend micro -->
<svg class="abs" style="left:16px;top:275px" width="19" height="20" viewBox="0 0 19 20"><path d="M1.5 2.5 Q1.5 1 3 1 H16 Q17.5 1 17.5 2.5 V13 Q17.5 16.5 9.5 19.3 Q1.5 16.5 1.5 13 Z" fill="#f3f3f3"/><path d="M1.5 12 Q1.5 16.5 9.5 19.3 Q17.5 16.5 17.5 12 Q9.5 17 1.5 12 Z" fill="#c81e1e"/><circle cx="9.5" cy="8.6" r="5.6" fill="#d71920"/><path d="M5.2 9.4 Q8 4.6 13.6 6 Q9.6 6.4 8.4 9.4 Q10.4 8 13.2 9 Q10.4 9.6 9.4 12.6 Q8.6 10 5.2 9.4 Z" fill="#fff"/></svg>
<div class="abs" style="left:49px;top:272px;width:2px;height:28px;background:#dfe7ee"></div>
<!-- tray -->
<svg class="abs" style="left:8px;top:510px" width="9" height="12" viewBox="0 0 9 12"><path d="M7 1.2 L2.2 6 L7 10.8" fill="none" stroke="#fff" stroke-width="1.2"/></svg>
<svg class="abs" style="left:5px;top:527px" width="15" height="12" viewBox="0 0 15 12"><path d="M1 4.2 H3.2 L6.2 1.4 V10.6 L3.2 7.8 H1 Z" fill="none" stroke="#fff" stroke-width="1"/><path d="M8.2 4 Q9.4 6 8.2 8 M10 2.6 Q12 6 10 9.4 M11.8 1.4 Q14.6 6 11.8 10.6" fill="none" stroke="#fff" stroke-width=".9"/></svg>
<svg class="abs" style="left:25px;top:526px" width="13" height="14" viewBox="0 0 13 14"><rect x="3" y="3.4" width="7" height="7.6" rx="1.6" fill="none" stroke="#fff" stroke-width="1.1"/><path d="M4.2 1.6 Q6.5 0.2 8.8 1.6 M4.2 12.6 Q6.5 14 8.8 12.6" fill="none" stroke="#fff" stroke-width="1"/><circle cx="6.5" cy="6" r="1" fill="#fff"/><path d="M10 5 H11.6 V9 H10" fill="none" stroke="#fff" stroke-width="1"/></svg>
<svg class="abs" style="left:7px;top:546px" width="13" height="12" viewBox="0 0 13 12"><circle cx="10.2" cy="9.6" r="1.4" fill="#fff"/><path d="M5.8 10.8 A5 5 0 0 1 11.4 5.2 M3.2 10.8 A7.8 7.8 0 0 1 11.4 2.6 M0.6 10.8 A10.4 10.4 0 0 1 11.4 0.4" fill="none" stroke="#b8bec6" stroke-width=".9"/></svg>
<div class="t" style="top:565px;font-size:16px;line-height:18px">A</div>
<div class="t" style="top:595px">20:09</div>
<div class="t" style="top:608px">土曜日</div>
<div class="t" style="top:621px">2023/02/11</div>
<svg class="abs" style="left:18px;top:646px" width="15" height="14" viewBox="0 0 15 14"><path d="M1.2 1.2 H13.8 V10 H9.4 L7.5 12.6 L5.6 10 H1.2 Z" fill="none" stroke="#fff" stroke-width="1.1" stroke-linejoin="round"/></svg>
<div class="abs" style="left:0;top:671px;width:51px;height:1px;background:#7b828c"></div>

</div>
</body>
</html>
